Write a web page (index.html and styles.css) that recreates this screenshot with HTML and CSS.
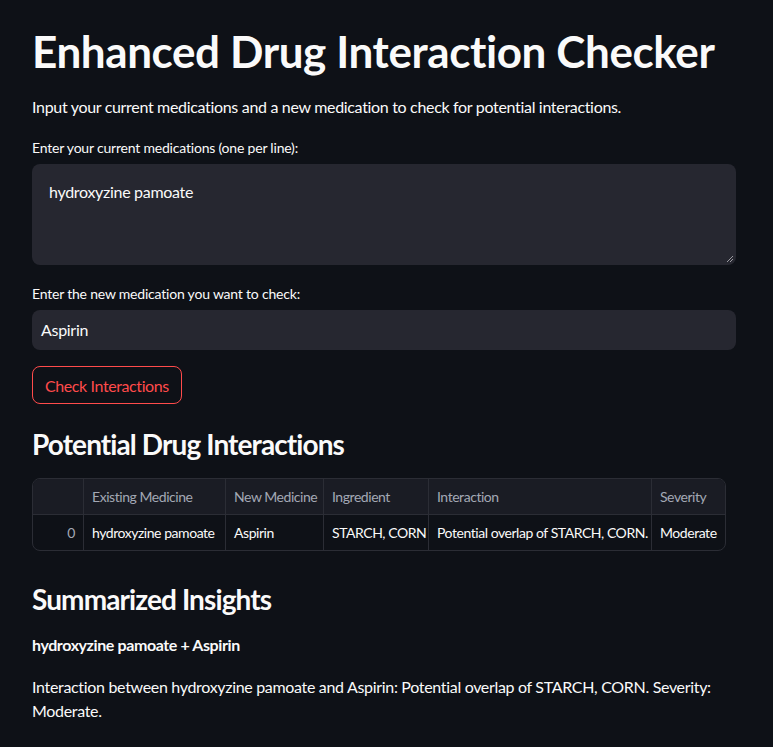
FILE: index.html
```html
<!DOCTYPE html>
<html>
<head>
<meta charset="utf-8">
<link rel="stylesheet" href="styles.css">
</head>
<body>
<main class="main">
  <h1 class="title">Enhanced Drug Interaction Checker</h1>
  <p class="intro">Input your current medications and a new medication to check for potential interactions.</p>

  <div class="field field-area">
    <label class="label">Enter your current medications (one per line):</label>
    <div class="textarea">hydroxyzine pamoate
      <svg class="grip" width="8" height="8" viewBox="0 0 8 8"><path d="M7 1 L1 7 M7 4 L4 7" stroke="#9a9aa0" stroke-width="1"/></svg>
    </div>
  </div>

  <div class="field field-input">
    <label class="label">Enter the new medication you want to check:</label>
    <div class="input">Aspirin</div>
  </div>

  <button class="btn">Check Interactions</button>

  <h2 class="h2 h2-first">Potential Drug Interactions</h2>

  <div class="grid">
    <div class="row head">
      <div class="c c-idx"></div>
      <div class="c c1">Existing Medicine</div>
      <div class="c c2">New Medicine</div>
      <div class="c c3">Ingredient</div>
      <div class="c c4">Interaction</div>
      <div class="c c5">Severity</div>
    </div>
    <div class="row body">
      <div class="c c-idx num">0</div>
      <div class="c c1">hydroxyzine pamoate</div>
      <div class="c c2">Aspirin</div>
      <div class="c c3">STARCH, CORN</div>
      <div class="c c4">Potential overlap of STARCH, CORN.</div>
      <div class="c c5">Moderate</div>
    </div>
  </div>

  <h2 class="h2 h2-second">Summarized Insights</h2>
  <p class="pair">hydroxyzine pamoate + Aspirin</p>
  <p class="summary">Interaction between hydroxyzine pamoate and Aspirin: Potential overlap of STARCH, CORN. Severity: Moderate.</p>
</main>
</body>
</html>
```

FILE: styles.css
```css
html, body {
  margin: 0;
  padding: 0;
  background: #0e1117;
  color: #fafafa;
  font-family: "Lato", "Liberation Sans", sans-serif;
}
.main {
  padding: 0 37px 0 32px;
  width: 704px;
}
.title {
  margin: 0;
  padding-top: 23px;
  font-size: 44px;
  line-height: 56px;
  font-weight: 700;
  letter-spacing: -0.4px;
}
.intro {
  margin: 16px 0 0;
  font-size: 16px;
  line-height: 24px;
  letter-spacing: -0.32px;
}
.field { display: flex; flex-direction: column; }
.label {
  font-size: 14px;
  line-height: 20px;
  margin-bottom: 6px;
  letter-spacing: -0.2px;
}
.field-area { margin-top: 19px; }
.textarea {
  position: relative;
  box-sizing: border-box;
  height: 101px;
  background: #262730;
  border-radius: 8px;
  padding: 16px 17px;
  font-size: 16px;
  line-height: 24px;
  letter-spacing: -0.3px;
}
.grip { position: absolute; right: 2px; bottom: 2px; }
.field-input { margin-top: 19px; }
.input {
  box-sizing: border-box;
  height: 40px;
  background: #262730;
  border-radius: 8px;
  padding: 8px 9px;
  font-size: 16px;
  line-height: 24px;
  letter-spacing: -0.3px;
}
.btn {
  margin-top: 16px;
  display: block;
  box-sizing: border-box;
  height: 38px;
  padding: 0 12px;
  background: #0e1117;
  border: 1px solid #ff4b4b;
  border-radius: 8px;
  color: #ff4b4b;
  font-family: inherit;
  font-size: 16px;
  letter-spacing: -0.4px;
}
.h2 {
  margin: 0;
  font-size: 28px;
  line-height: 36px;
  font-weight: 700;
  letter-spacing: -0.9px;
}
.h2-first { margin-top: 22px; }
.grid {
  margin-top: 16px;
  width: 692px;
  border: 1px solid #2b2d35;
  border-radius: 8px;
  overflow: hidden;
  font-size: 14px;
  letter-spacing: -0.45px;
}
.row { display: flex; }
.head { background: #1a1c24; color: #a3a8b4; height: 35px; border-bottom: 1px solid #2b2d35; }
.body { height: 35px; }
.c {
  box-sizing: border-box;
  padding: 0 8px;
  display: flex;
  align-items: center;
  border-left: 1px solid #2b2d35;
  white-space: nowrap;
}
.c-idx { border-left: none; width: 50px; }
.num { justify-content: flex-end; color: #a3a8b4; }
.c1 { width: 142px; }
.c2 { width: 98px; }
.c3 { width: 105px; }
.c4 { width: 223px; }
.c5 { width: 74px; }
.h2-second { margin-top: 30px; }
.pair {
  margin: 16px 0 0;
  font-size: 16px;
  font-weight: 700;
  line-height: 24px;
  letter-spacing: -0.4px;
}
.summary {
  margin: 18px 0 0;
  font-size: 16px;
  line-height: 24px;
  letter-spacing: -0.32px;
}
```
